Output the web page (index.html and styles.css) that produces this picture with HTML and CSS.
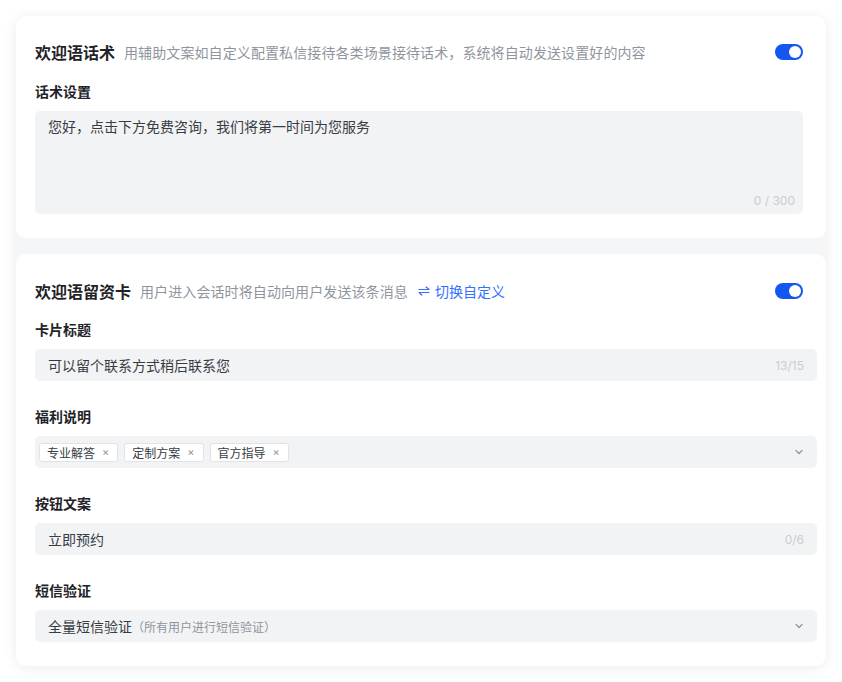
FILE: index.html
```html
<!doctype html>
<html lang="zh">
  <head>
    <meta charset="UTF-8" />
    <meta name="viewport" content="width=device-width, initial-scale=1.0" />
    <title>欢迎语设置</title>
    <link rel="stylesheet" href="styles.css">
  </head>
  <body>
    <div class="panel">
      <section class="card card-greet">
        <div class="card-head">
          <span class="card-title">欢迎语话术</span>
          <span class="card-desc">用辅助文案如自定义配置私信接待各类场景接待话术，系统将自动发送设置好的内容</span>
          <span class="switch"><span class="knob"></span></span>
        </div>
        <div class="field field-first">
          <label class="field-label">话术设置</label>
          <div class="textarea">
            <span class="textarea-text">您好，点击下方免费咨询，我们将第一时间为您服务</span>
            <span class="count">0 / 300</span>
          </div>
        </div>
      </section>

      <section class="card card-lead">
        <div class="card-head">
          <span class="card-title">欢迎语留资卡</span>
          <span class="card-desc">用户进入会话时将自动向用户发送该条消息</span>
          <a class="switch-link">
            <svg width="14" height="14" viewBox="0 0 14 14" fill="none" stroke="currentColor" stroke-width="1.2" stroke-linecap="round" stroke-linejoin="round">
              <path d="M2 5.5h10L9.2 3" />
              <path d="M12 8.5H2l2.8 2.5" />
            </svg>
            切换自定义
          </a>
          <span class="switch"><span class="knob"></span></span>
        </div>

        <div class="field field-first">
          <label class="field-label">卡片标题</label>
          <div class="input">
            <span class="input-text">可以留个联系方式稍后联系您</span>
            <span class="count">13/15</span>
          </div>
        </div>

        <div class="field">
          <label class="field-label">福利说明</label>
          <div class="input select tags">
            <span class="tag">专业解答<i class="tag-close">×</i></span>
            <span class="tag">定制方案<i class="tag-close">×</i></span>
            <span class="tag">官方指导<i class="tag-close">×</i></span>
            <svg class="arrow" width="12" height="12" viewBox="0 0 12 12" fill="none" stroke="currentColor" stroke-width="1.2" stroke-linecap="round" stroke-linejoin="round">
              <path d="M3 4.5l3 3 3-3" />
            </svg>
          </div>
        </div>

        <div class="field">
          <label class="field-label">按钮文案</label>
          <div class="input">
            <span class="input-text">立即预约</span>
            <span class="count">0/6</span>
          </div>
        </div>

        <div class="field">
          <label class="field-label">短信验证</label>
          <div class="input select">
            <span class="input-text">全量短信验证<span class="hint">（所有用户进行短信验证）</span></span>
            <svg class="arrow" width="12" height="12" viewBox="0 0 12 12" fill="none" stroke="currentColor" stroke-width="1.2" stroke-linecap="round" stroke-linejoin="round">
              <path d="M3 4.5l3 3 3-3" />
            </svg>
          </div>
        </div>
      </section>
    </div>
  </body>
</html>
```
FILE: styles.css
```css
body {
  margin: 0;
  background: #fff;
  font-family: "Inter", "Noto Sans CJK SC", sans-serif;
  color: #1f2329;
}

.panel {
  margin: 16px;
  width: 810px;
  background: #f5f6f7;
  border-radius: 10px;
  box-shadow: 0 2px 14px rgba(0, 0, 0, 0.08);
  display: flex;
  flex-direction: column;
  gap: 16px;
}

.card {
  background: #fff;
  border-radius: 10px;
  padding: 24px 23px 24px 19px;
}

.card-lead {
  padding: 25px 9px 24px 19px;
}

.card-head {
  display: flex;
  align-items: center;
  height: 24px;
}

.card-title {
  font-size: 16px;
  font-weight: 600;
  color: #1f2329;
}

.card-desc {
  margin-left: 9px;
  font-size: 14px;
  letter-spacing: 0.1px;
  color: #8f959e;
}

.switch-link {
  display: flex;
  align-items: center;
  gap: 4px;
  margin-left: 9px;
  font-size: 14px;
  color: #3370ff;
}

.switch {
  margin-left: auto;
  width: 28px;
  height: 16px;
  border-radius: 8px;
  background: #1456f0;
  position: relative;
}

.card-lead .switch {
  margin-right: 14px;
}

.knob {
  position: absolute;
  top: 2px;
  right: 2px;
  width: 12px;
  height: 12px;
  border-radius: 50%;
  background: #fff;
}

.field {
  display: flex;
  flex-direction: column;
  gap: 8px;
  margin-top: 25px;
}

.field-first {
  margin-top: 16px;
}

.card-greet .field-first {
  margin-top: 17px;
}

.field-label {
  font-size: 14px;
  font-weight: 600;
  line-height: 22px;
}

.textarea {
  height: 103px;
  background: #f2f3f5;
  border-radius: 5px;
  padding: 5px 8px 0 13px;
  box-sizing: border-box;
  display: flex;
  flex-direction: column;
  justify-content: space-between;
}

.textarea-text {
  font-size: 14px;
  line-height: 22px;
  color: #373c43;
}

.textarea .count {
  align-self: flex-end;
  margin-bottom: 6px;
}

.count {
  font-size: 12px;
  color: #c9cdd4;
}

.input {
  height: 32px;
  background: #f2f3f5;
  border-radius: 5px;
  padding: 0 13px;
  display: flex;
  align-items: center;
  justify-content: space-between;
}

.input-text {
  font-size: 14px;
  color: #373c43;
}

.hint {
  font-size: 12px;
  color: #8f959e;
}

.select .arrow {
  color: #8f959e;
  margin-right: -1px;
}

.tags {
  justify-content: flex-start;
  gap: 6px;
  padding-left: 4px;
}

.tags .arrow {
  margin-left: auto;
}

.tag {
  display: flex;
  align-items: center;
  height: 19px;
  padding: 0 8px 0 7px;
  box-sizing: border-box;
  background: #fff;
  border: 1px solid #e1e3e6;
  border-radius: 3px;
  font-size: 12px;
  color: #373c43;
}

.tag-close {
  font-style: normal;
  margin-left: 7px;
  font-size: 11px;
  color: #8f959e;
}
```
